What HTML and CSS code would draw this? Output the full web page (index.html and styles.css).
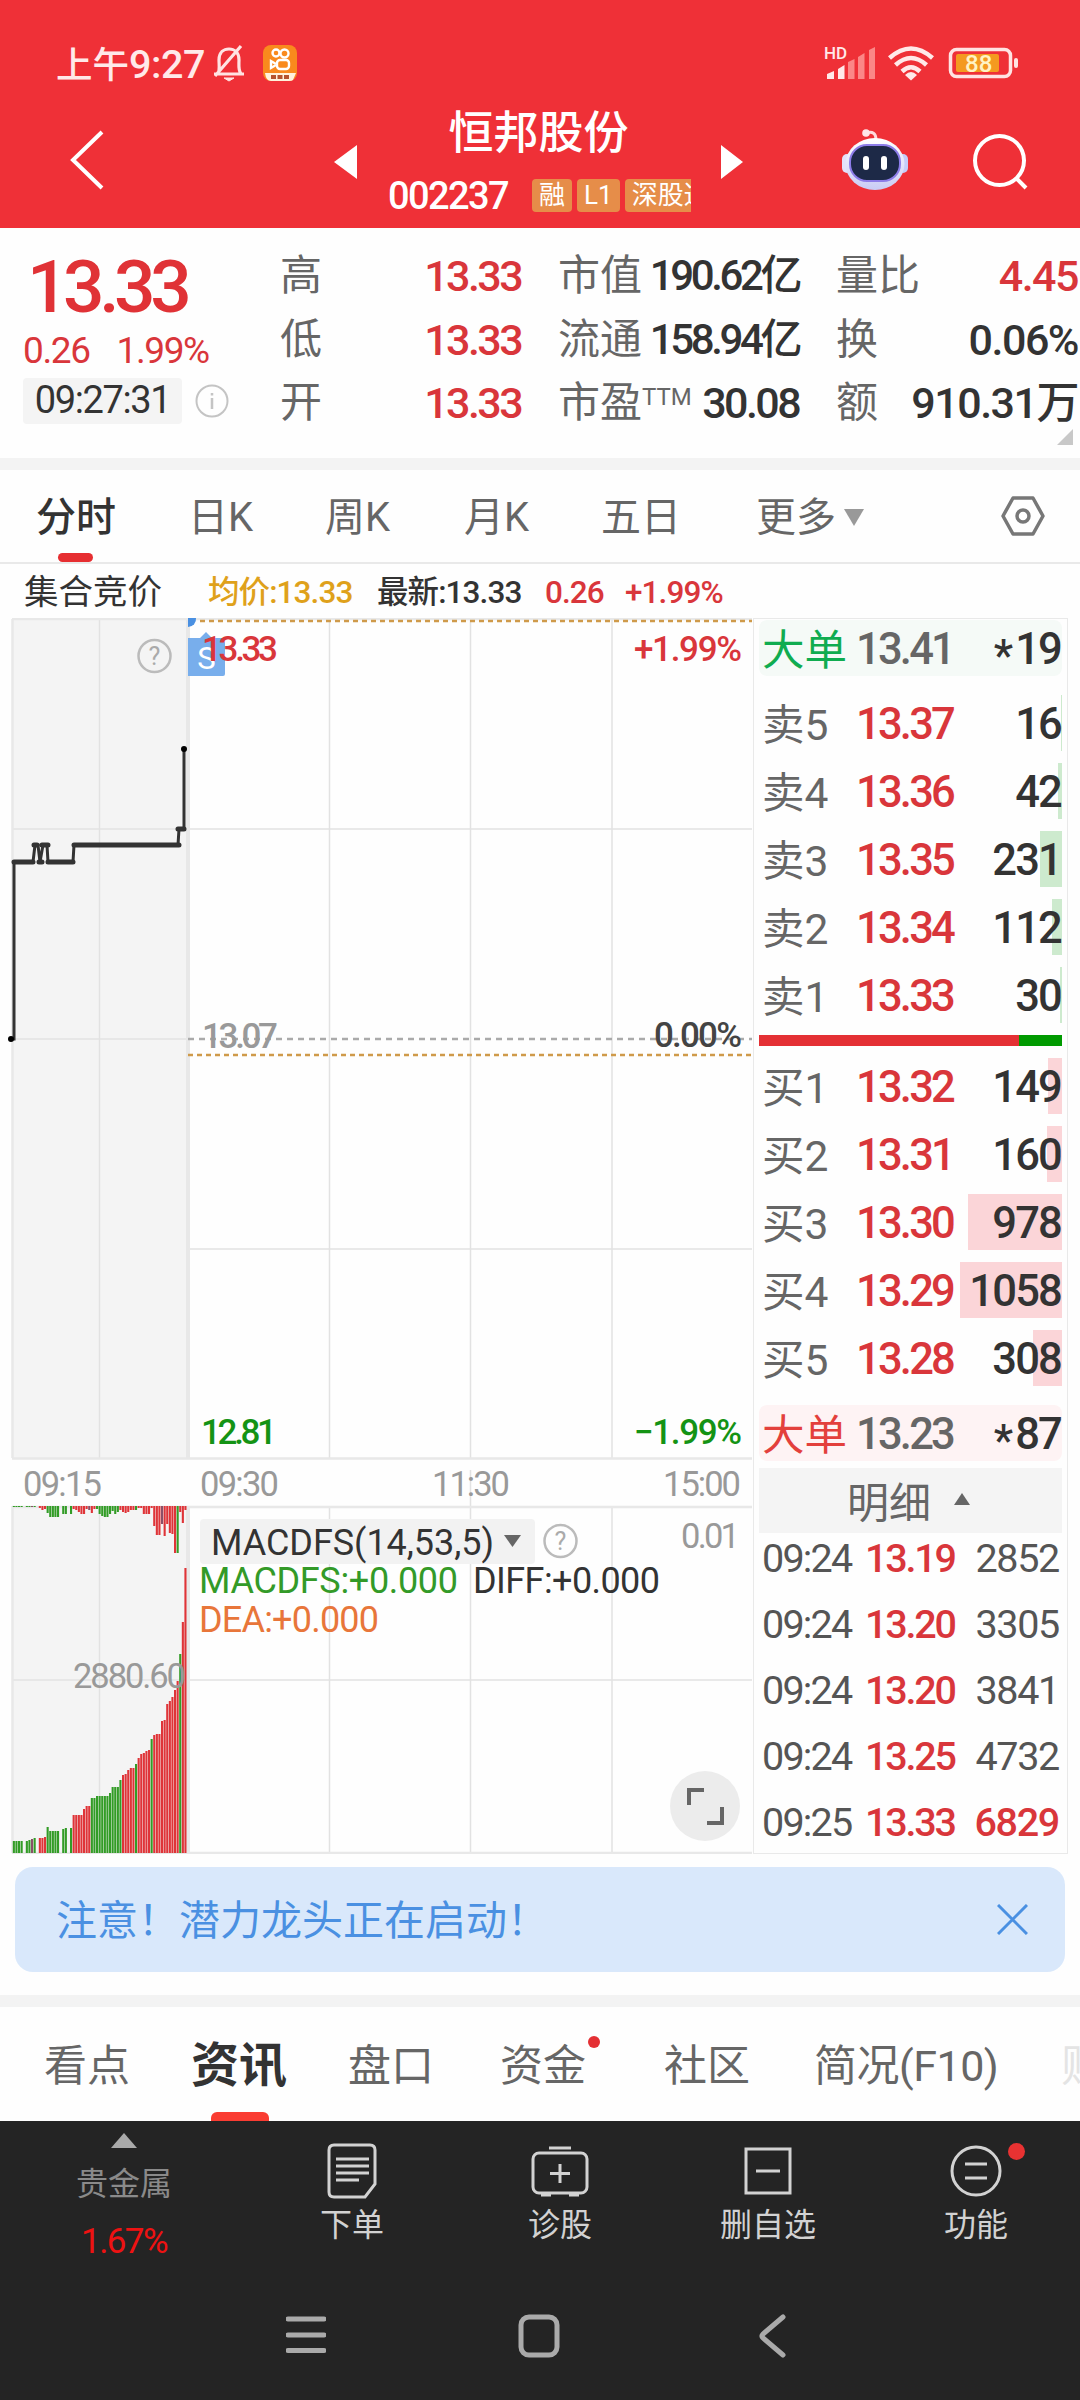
FILE: index.html
```html
<!DOCTYPE html>
<html lang="zh-CN">

<head>
<meta charset="utf-8">
<title>恒邦股份 002237</title>
<link rel="stylesheet" href="styles.css">
</head>

<body>
  <div class="header">
    <div class="statusbar">
      <span class="clock">上午<span class="clocknum">9:27</span></span>
      <svg class="bell" width="36" height="40" viewBox="0 0 36 40" fill="none" stroke="#ffe3e3" stroke-width="3.2">
        <path d="M3 31H33M7 31C9 27 8 22 8 17C8 9 13 6 18 6C23 6 28 9 28 17C28 22 27 27 30 31M30 3L4 33"/>
        <path d="M13 35H23L18 38Z" fill="#ffe3e3" stroke-width="1"/>
      </svg>
      <svg class="appicon" width="34" height="36" viewBox="0 0 34 36">
        <rect width="34" height="36" rx="8" fill="#f98a1d"/>
        <g fill="none" stroke="#fff" stroke-width="2.4"><circle cx="13" cy="8" r="3.5"/><circle cx="21.500" cy="8.500" r="4"/><rect x="14" y="15" width="12" height="9" rx="3"/><path d="M13 19L8 16V23L13 20"/></g>
        <path d="M2 28H33L30 35Q29 36 26 36H8Q3 36 2 28Z" fill="#fff2dc"/>
        <path d="M8 32H27" stroke="#b5532d" stroke-width="4" stroke-dasharray="5 1.500"/>
      </svg>
      <svg class="signals" width="200" height="40" viewBox="822 43 200 40">
        <text x="824" y="59" class="hd">HD</text>
        <g fill="#ffe9e9">
          <path d="M827 74L834 71V79H827Z"/><path d="M838 69L844.500 65V79H838Z"/>
        </g>
        <g fill="#fb8787">
          <path d="M848 62L854.500 59V79H848Z"/><path d="M858 57L864.500 53V79H858Z"/><path d="M869 50L875 47V79H869Z"/>
        </g>
        <g fill="none" stroke="#ffe9e9" stroke-width="4.500">
          <path d="M889.500 58Q911 39 932.500 58"/><path d="M895.500 65Q911 51 926.500 65"/><path d="M902 71.500Q911 63 920 71.500"/>
        </g>
        <path d="M905 75Q911 69 917 75L911 80.500Z" fill="#ffe9e9"/>
        <rect x="950.500" y="49.500" width="60" height="27" rx="6" fill="none" stroke="#ffe3e3" stroke-width="3.500"/>
        <rect x="956" y="54" width="43" height="18" rx="2" fill="#f49a20"/>
        <rect x="1014" y="58" width="4" height="10" rx="2" fill="#ffe3e3"/>
        <text x="965" y="71.500" class="battery">88</text>
      </svg>
    </div>
    <div class="titlebar">
      <svg class="back" width="40" height="62" viewBox="0 0 40 62" fill="none" stroke="#fff" stroke-width="4"><path d="M34 3L5 31L34 59"/></svg>
      <svg class="prev" width="24" height="34" viewBox="0 0 24 34"><path d="M23 0V34L0 17Z" fill="#fff"/></svg>
      <div class="stock">
        <div class="name">恒邦股份</div>
        <div class="code">
          <span class="codenum">002237</span>
          <div class="tags"><span class="tag">融</span><span class="tag">L1</span><span class="tag">深股通</span></div>
        </div>
      </div>
      <svg class="next" width="23" height="34" viewBox="0 0 23 34"><path d="M0 0V34L22 17Z" fill="#fff"/></svg>
      <svg class="robot" width="68" height="64" viewBox="0 0 68 64">
        <defs><linearGradient id="shell" x1="0" y1="0" x2="0" y2="1"><stop offset="0" stop-color="#fff"/><stop offset="1" stop-color="#c9cbf5"/></linearGradient></defs>
        <path d="M25 5Q35 2 35 12" fill="none" stroke="#ffd9dd" stroke-width="3"/>
        <circle cx="25" cy="5" r="3.800" fill="#ffe6e8"/>
        <rect x="1" y="26" width="10" height="19" rx="5" fill="#e3e2fb"/><rect x="57" y="26" width="10" height="19" rx="5" fill="#c5cdfa"/>
        <ellipse cx="34" cy="36" rx="29.500" ry="26" fill="url(#shell)"/>
        <rect x="9" y="17" width="50" height="36" rx="17" fill="#1d2947" stroke="#8c7ce8" stroke-width="2"/>
        <rect x="22" y="28" width="6" height="14" rx="3" fill="#fff"/><rect x="40" y="28" width="6" height="14" rx="3" fill="#fff"/>
      </svg>
      <svg class="search" width="58" height="58" viewBox="0 0 58 58" fill="none" stroke="#fff" stroke-width="4"><circle cx="27.500" cy="27.500" r="24.500"/><path d="M44 45L54 55"/></svg>
    </div>
  </div>

  <div class="quote">
    <div class="last">
      <div class="price">13.33</div>
      <div class="change"><span>0.26</span><span>1.99%</span></div>
      <div class="time">
        <span class="timechip">09:27:31</span>
        <svg width="34" height="34" viewBox="0 0 34 34" fill="none" stroke="#c4c4c4" stroke-width="2"><circle cx="17" cy="17" r="15.500"/><path d="M17 14V25M17 9V11.500" stroke-width="2.500"/></svg>
      </div>
    </div>
    <div class="stats">
      <div><label>高</label><b class="red">13.33</b></div>
      <div><label>低</label><b class="red">13.33</b></div>
      <div><label>开</label><b class="red">13.33</b></div>
    </div>
    <div class="stats">
      <div><label>市值</label><b class="tight">190.62亿</b></div>
      <div><label>流通</label><b class="tight">158.94亿</b></div>
      <div><label>市盈<sup>TTM</sup></label><b>30.08</b></div>
    </div>
    <div class="stats">
      <div><label>量比</label><b class="red">4.45</b></div>
      <div><label>换</label><b>0.06%</b></div>
      <div><label>额</label><b>910.31万</b></div>
    </div>
    <span class="corner"></span>
  </div>
  <div class="strip"></div>

  <div class="periods">
    <span class="active">分时</span>
    <span>日K</span>
    <span>周K</span>
    <span>月K</span>
    <span>五日</span>
    <span>更多<i class="down"></i></span>
    <svg width="46" height="42" viewBox="0 0 46 42" fill="none" stroke="#777" stroke-width="3.500" stroke-linejoin="round"><path d="M13 3H33L43 21L33 39H13L3 21Z"/><circle cx="23" cy="21" r="6"/></svg>
  </div>

  <div class="avgline">
    <span class="auction">集合竞价</span>
    <span class="avg">均价:13.33</span>
    <span class="latest">最新:13.33</span>
    <span class="red diff">0.26</span>
    <span class="red">+1.99%</span>
  </div>

  <div class="main">
    <svg class="chart" width="753" height="1236" viewBox="0 618 753 1236">
      <rect x="12" y="619" width="176" height="839" fill="#f4f4f4"/>
      <rect x="12" y="1506" width="176" height="347" fill="#f4f4f4"/>
      <g fill="none" stroke="#e2e2e2" stroke-width="1.500">
        <path d="M99.500 619V1458M329.500 619V1458M470.500 619V1458M612 619V1458"/>
        <path d="M99.500 1506V1853M329.500 1506V1853M470.500 1470V1853M612 1506V1853"/>
        <path d="M12 829H752M12 1039H188M188 1249H752M12 1680H752"/>
      </g>
      <g fill="none" stroke="#e8e8e8" stroke-width="2.500">
        <path d="M12 619H752M12 1458.500H752M12 1507H752M12 1853H752M12.500 619V1458M12.500 1506V1853"/>
        <path d="M188 619V1458M188 1506V1853" stroke-width="4"/>
      </g>
      <path d="M188 1039H752" stroke="#aaa" stroke-width="2.500" stroke-dasharray="6 5"/>
      <path d="M200 621H752M188 1055H752" stroke="#cf9a4a" stroke-width="2.500" stroke-dasharray="5 4"/>
      <path d="M188 618H196A8 8 0 0 1 188 627Z" fill="#4a90e2"/>
      <path d="M190 638H200L206 632L212 638H223Q225 638 225 640V674Q225 676 223 676H188V638Z" fill="#78aeec"/>
      <text x="206.500" y="669" fill="#fff" font-size="31" text-anchor="middle">S</text>
      <path d="M11 1039H14V862H33L35 845H38L40 862L43 845H47L48 862H73L74 845H178L179 829H184V749" fill="none" stroke="#333" stroke-width="3"/>
      <path d="M14 862H33M34 845H37M39 862H42M42 845H48M48 862H73M74 845H179M178 829H184" fill="none" stroke="#333" stroke-width="5" stroke-linecap="round"/>
      <circle cx="11" cy="1039" r="3"/><circle cx="184" cy="749" r="3"/>
      <g id="bars"></g>
      <g fill="none" stroke="#bbb" stroke-width="2.500"><circle cx="154.500" cy="656" r="16"/><circle cx="560.500" cy="1541" r="16"/></g>
      <g font-size="25" fill="#aaa" text-anchor="middle"><text x="154.500" y="665">?</text><text x="560.500" y="1550">?</text></g>
      <g class="num" fill="#d9363b"><text x="202" y="661" textLength="76">13.33</text><text x="634" y="661" textLength="108">+1.99%</text></g>
      <g class="num" fill="#999"><text x="202" y="1048" textLength="76">13.07</text></g>
      <text class="num" x="654" y="1047" textLength="88" fill="#444">0.00%</text>
      <g class="num" fill="#149314"><text x="201" y="1444" textLength="76">12.81</text><text x="634" y="1444" textLength="108">−1.99%</text></g>
      <g class="axis">
        <text x="23" y="1496" textLength="79">09:15</text><text x="200" y="1496" textLength="79">09:30</text>
        <text x="432" y="1496" textLength="78">11:30</text><text x="663" y="1496" textLength="78">15:00</text>
        <text x="681" y="1548" textLength="59">0.01</text>
        <text x="73" y="1688" textLength="113">2880.60</text>
      </g>
      <rect x="200" y="1519" width="335" height="45" rx="4" fill="#f2f2f2"/>
      <path d="M504 1535H521L512.500 1547Z" fill="#666"/>
      <g class="macd">
        <text x="211" y="1555" textLength="283" fill="#333">MACDFS(14,53,5)</text>
        <text x="199" y="1593" textLength="259" fill="#339a28">MACDFS:+0.000</text>
        <text x="473" y="1593" textLength="187" fill="#333">DIFF:+0.000</text>
        <text x="199" y="1632" textLength="180" fill="#e8763a">DEA:+0.000</text>
      </g>
      <circle cx="705" cy="1806" r="35" fill="#ececec"/>
      <path d="M689 1805V1790H704M707 1823H722V1807" fill="none" stroke="#666" stroke-width="4"/>
    </svg>

    <div class="book">
      <div class="big sellbig"><span>大单</span><em>13.41</em><b><i>*</i>19</b></div>
      <div class="levels">
        <div class="level"><span>卖5</span><em>13.37</em><b>16</b><u class="g" style="width:1px"></u></div>
        <div class="level"><span>卖4</span><em>13.36</em><b>42</b><u class="g" style="width:4px"></u></div>
        <div class="level"><span>卖3</span><em>13.35</em><b>231</b><u class="g" style="width:22px"></u></div>
        <div class="level"><span>卖2</span><em>13.34</em><b>112</b><u class="g" style="width:10px"></u></div>
        <div class="level"><span>卖1</span><em>13.33</em><b>30</b><u class="g" style="width:2px"></u></div>
      </div>
      <div class="ratio"><div class="buyratio"></div></div>
      <div class="levels buy">
        <div class="level"><span>买1</span><em>13.32</em><b>149</b><u style="width:14px"></u></div>
        <div class="level"><span>买2</span><em>13.31</em><b>160</b><u style="width:15px"></u></div>
        <div class="level"><span>买3</span><em>13.30</em><b>978</b><u style="width:94px"></u></div>
        <div class="level"><span>买4</span><em>13.29</em><b>1058</b><u style="width:102px"></u></div>
        <div class="level"><span>买5</span><em>13.28</em><b>308</b><u style="width:29px"></u></div>
      </div>
      <div class="big buybig"><span>大单</span><em>13.23</em><b><i>*</i>87</b></div>
      <div class="detail">明细<i class="up"></i></div>
      <div class="ticks">
        <div><span>09:24</span><em>13.19</em><b>2852</b></div>
        <div><span>09:24</span><em>13.20</em><b>3305</b></div>
        <div><span>09:24</span><em>13.20</em><b>3841</b></div>
        <div><span>09:24</span><em>13.25</em><b>4732</b></div>
        <div><span>09:25</span><em>13.33</em><b class="red">6829</b></div>
      </div>
    </div>
  </div>

  <div class="notice">
    <span>注意！潜力龙头正在启动！</span>
    <svg width="31" height="31" viewBox="0 0 31 31" stroke="#4a90e2" stroke-width="3"><path d="M1 1L30 30M30 1L1 30"/></svg>
  </div>
  <div class="strip"></div>

  <div class="sections">
    <span>看点</span>
    <span class="active">资讯</span>
    <span>盘口</span>
    <span class="dotted">资金</span>
    <span>社区</span>
    <span class="brief">简况(F10)</span>
    <span class="faded">财务</span>
  </div>

  <div class="toolbar">
    <div class="index">
      <i class="up"></i>
      <span class="metal">贵金属</span>
      <span class="rate">1.67%</span>
    </div>
    <div class="tool">
      <svg width="60" height="58" viewBox="0 0 60 58"><path d="M12 3H48Q53 3 53 8V42L43 55H12Q7 55 7 50V8Q7 3 12 3Z"/><path d="M14 17H47M14 24H47M14 31H47M14 38H37"/></svg>
      <span>下单</span>
    </div>
    <div class="tool">
      <svg width="60" height="58" viewBox="0 0 60 58"><rect x="3" y="11" width="54" height="40" rx="6"/><path d="M19 6H41M30 22V41M20 31.500H40M11 53H21M39 53H49"/></svg>
      <span>诊股</span>
    </div>
    <div class="tool">
      <svg width="60" height="58" viewBox="0 0 60 58"><rect x="8" y="7" width="44" height="44"/><path d="M18 29H42"/></svg>
      <span>删自选</span>
    </div>
    <div class="tool reddot">
      <svg width="60" height="58" viewBox="0 0 60 58"><circle cx="30" cy="29" r="24"/><path d="M19 22H41M19 36H41"/></svg>
      <span>功能</span>
    </div>
  </div>
  <div class="navkeys">
    <svg width="40" height="42" viewBox="0 0 40 42"><path d="M2 4H38M2 20H38M2 35.500H38"/></svg>
    <svg width="42" height="44" viewBox="0 0 42 44"><rect x="3" y="3" width="36" height="38" rx="8"/></svg>
    <svg width="30" height="44" viewBox="0 0 30 44"><path d="M26 3L6 20Q4 22 6 24L26 41"/></svg>
  </div>
  <script src="script.js"></script>
</body>
</html>
```
FILE: styles.css
```css
body {
  margin: 0;
  width: 1080px;
  height: 2400px;
  overflow: hidden;
  background: #fefefe;
  color: #333;
  font-family: Roboto, "Noto Sans CJK SC", sans-serif;
}

* {
  box-sizing: border-box;
}

svg {
  display: block;
  flex: none;
}

em,
i {
  font-style: normal;
}

u {
  text-decoration: none;
}

b {
  font-weight: 500;
}

.red {
  color: #d9363b;
}

/* header */

.header {
  height: 228px;
  background: #ef3037;
  color: #fff;
}

.statusbar {
  display: flex;
  align-items: center;
  height: 104px;
  padding: 22px 58px 0 56px;
  color: #ffe9e9;
}

.clock {
  width: 155px;
  padding-bottom: 2px;
  font-size: 36.500px;
  font-weight: 500;
  white-space: nowrap;
}

.clocknum {
  font-size: 39.500px;
  letter-spacing: -0.4px;
}

.appicon {
  margin-left: 16px;
}

.signals {
  margin-left: auto;
}

.hd {
  font-size: 17px;
  font-weight: 500;
  fill: #ffe9e9;
}

.battery {
  font-size: 24px;
  font-weight: 500;
  fill: #fff3c4;
}

.titlebar {
  display: flex;
  height: 124px;
  padding-left: 68px;
}

.back {
  margin-top: 25px;
}

.prev {
  margin: 41px 0 0 226px;
}

.stock {
  width: 303px;
  margin: 0 30px;
  text-align: center;
}

.name {
  height: 64px;
  padding-right: 2px;
  line-height: 59px;
  font-size: 45px;
  font-weight: 500;
}

.code {
  display: flex;
  align-items: center;
  height: 54px;
  line-height: 54px;
}

.codenum {
  width: 144px;
  padding-top: 2px;
  text-align: left;
  font-size: 38px;
  font-weight: 500;
  letter-spacing: -1.6px;
}

.tags {
  display: flex;
  gap: 5px;
  width: 159px;
  height: 33px;
  overflow: hidden;
}

.tag {
  flex: none;
  padding: 0 7px;
  border-radius: 4px;
  background: #e68d49;
  font-size: 26px;
  line-height: 33px;
}

.next {
  margin-top: 41px;
}

.robot {
  margin: 24px 0 0 97px;
}

.search {
  margin: 29px 0 0 63px;
}

/* quote panel */

.quote {
  position: relative;
  display: flex;
  height: 230px;
  padding-top: 17px;
}

.last {
  flex: none;
  width: 280px;
  padding-left: 23px;
}

.price {
  height: 84px;
  padding-left: 4px;
  line-height: 84px;
  font-size: 73px;
  font-weight: 500;
  letter-spacing: -5.4px;
  color: #e03236;
}

.change {
  display: flex;
  gap: 27px;
  height: 44px;
  line-height: 43px;
  font-size: 37px;
  letter-spacing: -1.4px;
  color: #d9363b;
}

.time {
  display: flex;
  align-items: center;
  gap: 13px;
  margin-top: 5px;
}

.timechip {
  width: 159px;
  height: 46px;
  border-radius: 4px;
  background: #f4f4f4;
  text-align: center;
  line-height: 45px;
  font-size: 38px;
  letter-spacing: -1.4px;
}

.stats {
  flex: none;
  width: 241px;
  margin-right: 37px;
}

.stats:nth-child(4) {
  width: 242px;
  margin-right: 0;
}

.stats div {
  display: flex;
  justify-content: space-between;
  height: 63.500px;
  line-height: 62px;
  white-space: nowrap;
}

.stats label {
  font-size: 42px;
  color: #666;
}

.stats sup {
  font-size: 24px;
  line-height: 0;
  vertical-align: 12px;
}

.stats b {
  font-size: 43px;
  letter-spacing: -2.6px;
}

.stats .tight {
  font-size: 42px;
  letter-spacing: -3.4px;
}

.stats:nth-child(4) b {
  letter-spacing: -1.500px;
}

.corner {
  position: absolute;
  right: 7px;
  bottom: 13px;
  border-left: 16px solid transparent;
  border-bottom: 16px solid #c8c8c8;
}

.strip {
  height: 12px;
  background: #f3f3f3;
}

/* period tabs */

.periods {
  display: grid;
  grid-template-columns: 152px 137px 139px 137px 155px 244px 46px;
  align-items: center;
  height: 94px;
  padding-left: 36px;
  border-bottom: 2px solid #e9e9e9;
  font-size: 40px;
  color: #666;
}

.periods span {
  position: relative;
  height: 92px;
  line-height: 95px;
}

.periods .active {
  color: #333;
  font-weight: 500;
}

.periods .active::after {
  content: "";
  position: absolute;
  left: 22px;
  bottom: 0;
  width: 35px;
  height: 9px;
  border-radius: 5px;
  background: #e62e31;
}

.down {
  display: inline-block;
  margin-left: 8px;
  border: 10px solid transparent;
  border-top: 17px solid #999;
  border-bottom: 0;
  vertical-align: 5px;
}

.avgline {
  display: flex;
  height: 54px;
  padding-left: 24px;
  line-height: 57px;
  font-size: 31.500px;
  font-weight: 500;
  letter-spacing: -0.9px;
}

.auction {
  width: 184px;
  font-size: 34.500px;
  font-weight: 400;
  letter-spacing: 0;
}

.avg {
  width: 169px;
  color: #dfa11b;
}

.latest {
  width: 168px;
}

.diff {
  width: 80px;
}

/* chart */

.main {
  display: flex;
  height: 1236px;
}

.num {
  font-size: 35px;
  font-weight: 500;
}

.axis {
  font-size: 34.500px;
  fill: #999;
}

.macd {
  font-size: 36px;
}

/* order book */

.book {
  width: 315px;
  padding: 1px 5px 0 5px;
  border: 1px solid #e9e9e9;
  font-size: 43.500px;
  letter-spacing: -1.8px;
}

.big,
.level {
  position: relative;
  display: flex;
  align-items: center;
  padding: 2px 1px 0 3px;
  height: 68px;
}

.big {
  height: 56px;
  border-radius: 8px;
}

.big span,
.level span {
  width: 94px;
  padding-bottom: 5px;
  font-size: 42.500px;
  letter-spacing: 0;
  color: #666;
}

.big em {
  font-weight: 500;
  letter-spacing: -2.8px;
  color: #666;
}

.level em {
  font-weight: 500;
  letter-spacing: -2.8px;
  color: #d9363b;
}

.level em,
.level b {
  position: relative;
  z-index: 1;
}

.big b,
.level b {
  margin-left: auto;
}

.big i {
  position: relative;
  top: 7px;
  margin-right: 4px;
}

.level u {
  position: absolute;
  right: 0;
  top: 6px;
  height: 56px;
  background: #fbd5d8;
}

.level .g {
  background: #cdeace;
}

.sellbig {
  background: #f5faf7;
}

.sellbig span {
  color: #10ac50;
}

.levels {
  margin-top: 13px;
}

.ratio {
  height: 11px;
  margin-top: 6px;
  background: #009a00;
}

.buyratio {
  width: 260px;
  height: 11px;
  background: #e43034;
}

.buy {
  margin-top: 6px;
}

.buybig {
  margin-top: 13px;
  background: #fef3f4;
}

.buybig span {
  color: #e3403c;
}

.detail {
  display: flex;
  align-items: center;
  height: 65px;
  margin-top: 7px;
  padding: 0 0 3px 88px;
  background: #f4f4f4;
  font-size: 42px;
  letter-spacing: 0;
  color: #666;
}

.up {
  border: 8px solid transparent;
  border-bottom: 12px solid #666;
  border-top: 0;
}

.detail .up {
  margin-left: 23px;
}

.ticks {
  margin-top: -7px;
  font-size: 39.500px;
  letter-spacing: -1.3px;
  color: #555;
}

.ticks div {
  display: flex;
  padding: 0 3px 0 3px;
  height: 66px;
  line-height: 66px;
}

.ticks span {
  width: 103px;
  letter-spacing: -1.8px;
}

.ticks em {
  color: #d9363b;
  font-weight: 500;
  letter-spacing: -2.200px;
}

.ticks b {
  margin-left: auto;
  font-weight: 400;
}

.ticks .red {
  font-weight: 500;
}

/* notice */

.notice {
  display: flex;
  align-items: center;
  justify-content: space-between;
  height: 105px;
  margin: 13px 15px 23px;
  padding: 0 37px 0 41px;
  border-radius: 18px;
  background: #d9e8fb;
  font-size: 41px;
  color: #4a90e2;
}

.notice span {
  padding-bottom: 5px;
}

/* section tabs */

.sections {
  display: flex;
  height: 114px;
  padding-left: 44px;
  line-height: 118px;
  overflow: hidden;
  white-space: nowrap;
  font-size: 43px;
  color: #666;
}

.sections span {
  position: relative;
  flex: none;
  height: 114px;
  margin-right: 66px;
}

.sections span:first-child,
.sections .active {
  margin-right: 61px;
}

.sections .active {
  font-size: 48px;
  font-weight: 700;
  color: #333;
}

.sections .active::after {
  content: "";
  position: absolute;
  left: 20px;
  bottom: 0;
  width: 58px;
  height: 9px;
  border-radius: 6px 6px 0 0;
  background: #fa3c32;
}

.sections .dotted {
  margin-right: 78px;
}

.sections .dotted::after {
  content: "";
  position: absolute;
  right: -14px;
  top: 29px;
  width: 12px;
  height: 12px;
  border-radius: 50%;
  background: #e43034;
}

.sections .brief {
  margin-left: -2px;
  margin-right: 63px;
  letter-spacing: -0.5px;
}

.sections .faded {
  color: #e4e4e4;
}

/* bottom toolbar */

.toolbar {
  display: grid;
  grid-template-columns: 248px repeat(4, 208px);
  height: 151px;
  background: #242424;
  text-align: center;
  font-size: 32px;
  color: #d2d2d2;
}

.index {
  display: flex;
  flex-direction: column;
  align-items: center;
  padding-top: 12px;
}

.index .up {
  border-width: 0 13px 15px 13px;
  border-bottom-color: #aaa;
}

.metal {
  margin-top: 16px;
  line-height: 40px;
  color: #8a8a8a;
}

.rate {
  margin-top: 17px;
  line-height: 42px;
  font-size: 35px;
  letter-spacing: -1.6px;
  color: #ee1212;
}

.tool {
  position: relative;
  display: flex;
  flex-direction: column;
  align-items: center;
  padding-top: 21px;
}

.tool svg {
  fill: none;
  stroke: #d2d2d2;
  stroke-width: 3;
}

.tool span {
  margin-top: 5px;
  line-height: 40px;
}

.reddot::after {
  content: "";
  position: absolute;
  left: 136px;
  top: 22px;
  width: 17px;
  height: 17px;
  border-radius: 50%;
  background: #e83232;
}

.navkeys {
  display: flex;
  align-items: center;
  height: 128px;
  padding: 0 0 0 286px;
  background: #242424;
}

.navkeys svg {
  margin-right: 192px;
  fill: none;
  stroke: #aaa;
  stroke-width: 5;
  stroke-linecap: round;
}

.navkeys svg + svg {
  margin-right: 197px;
}
```
FILE: script.js
```js
// Call auction bars, one letter per bar: g green, r red, p purple, - no bar
var colors = "gggg-ggpg-rrrggggg-gg-grrrrrrrggggggggggggrrrrrgrrrrrgrrrrrrrrrrgrr";
var matched = [12, 12, 12, 12, 0, 12, 13, 14, 15, 0, 15, 15, 16, 26, 22, 22, 22, 22, 0, 24, 25, 0, 25, 38, 38, 38, 38, 44, 47, 47,
  55, 55, 57, 57, 57, 57, 57, 60, 66, 66, 66, 73, 78, 79, 83, 85, 85, 89, 95, 99, 100, 102, 103, 114, 118, 119, 119,
  132, 133, 149, 152, 156, 163, 172, 199, 231, 285];
var topColors = "gggg-ggpg-rrrggggg-gg-grrrrrrprrggggggggg" + "rrrrrrgrrrrrrrrrprrrrrgrr";
var unmatched = [1, 1, 1, 1, 0, 1, 1, 1, 1, 0, 2, 4, 3, 7, 11, 11, 11, 11, 0, 8, 8, 0, 8, 3, 4, 6, 8, 8, 3, 4,
  7, 3, 3, 8, 10, 11, 11, 8, 5, 8, 6, 4, 6, 7, 6, 4, 4, 4, 2, 2, 8, 8, 8, 2, 20, 29, 29, 18, 30, 18, 27, 28, 47, 47, 6, 17, 4];
var fill = { g: "#329c26", r: "#df3438", p: "#8a5068" };
var step = 2.6;
var out = "";
var i;
for (i = 0; i < matched.length; i++) {
    var x = (12.8 + i * step).toFixed(1);
    if (matched[i]) {
        out += '<rect x="' + x + '" y="' + (1853 - matched[i]) + '" width="2.1" height="' + matched[i] + '" fill="' + fill[colors[i]] + '"/>';
    }
    if (unmatched[i]) {
        out += '<rect x="' + x + '" y="1506" width="2.1" height="' + unmatched[i] + '" fill="' + (fill[topColors[i]] || fill.r) + '"/>';
    }
}
document.getElementById("bars").innerHTML = out;
```
